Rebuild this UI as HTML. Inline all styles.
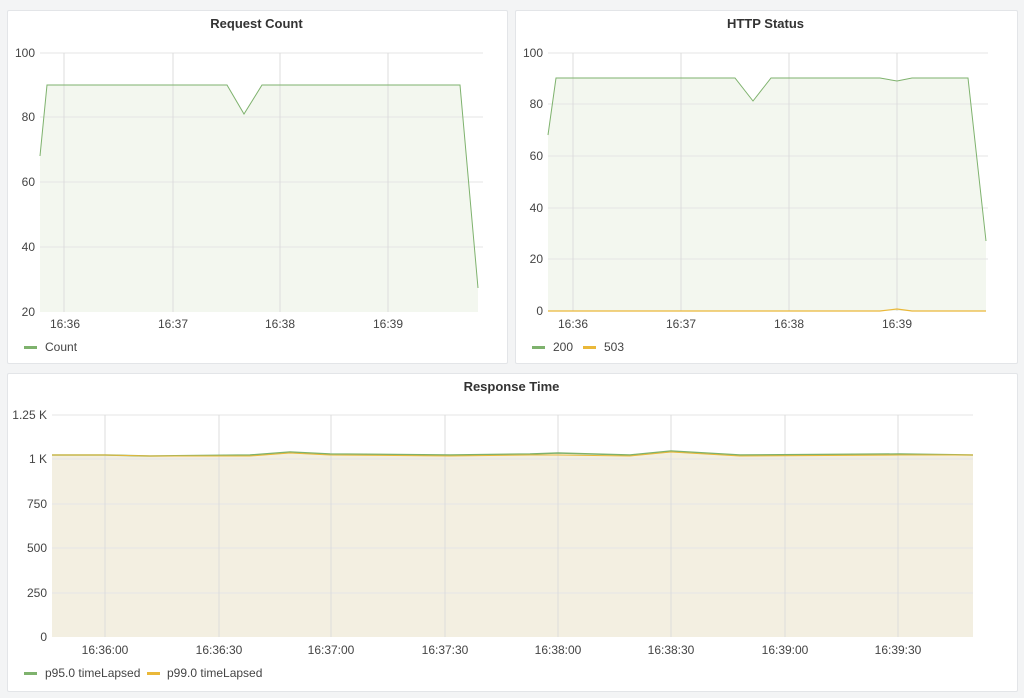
<!DOCTYPE html>
<html><head><style>
body{margin:0;width:1024px;height:698px;background:#f3f4f5;font-family:"Liberation Sans",sans-serif;position:relative;overflow:hidden}
.p{position:absolute;background:#fff;border:1px solid #e3e5e8;border-radius:2px}
.t{position:absolute;width:100%;text-align:center;top:6px;font-size:13px;font-weight:bold;color:#333}
svg{position:absolute;left:0;top:0}
svg text{font-family:"Liberation Sans",sans-serif;font-size:12px;fill:#444}
</style></head><body>
<div class="p" style="left:7px;top:10px;width:499px;height:352px"></div>
<div class="p" style="left:515px;top:10px;width:501px;height:352px"></div>
<div class="p" style="left:7px;top:373px;width:1009px;height:317px"></div>
<div style="position:absolute;left:7px;top:10px;width:499px"><div class="t">Request Count</div></div>
<div style="position:absolute;left:515px;top:10px;width:501px"><div class="t">HTTP Status</div></div>
<div style="position:absolute;left:7px;top:373px;width:1009px"><div class="t">Response Time</div></div>
<svg width="1024" height="698">
<polygon points="40,156 47,85 227,85 244,114 262,85 460,85 478,288 478,312 40,312" fill="#f3f7ef"/>
<polygon points="548,135 556,78 735,78 753,101 771,78 880,78 897,81 912,78 968,78 986,241 986,311 548,311" fill="#f3f7ef"/>
<polygon points="52,455 105,455 150,456 250,455 290,452 330,454 450,455 530,454 558,453 630,455 671,451 740,455 900,454 973,455 973,637 52,637" fill="#f3efe1"/>
<g stroke="#e6e6e6" stroke-width="1">
<line x1="40" y1="53" x2="483" y2="53"/><line x1="40" y1="117" x2="483" y2="117"/><line x1="40" y1="182" x2="483" y2="182"/><line x1="40" y1="247" x2="483" y2="247"/>
<line x1="548" y1="53" x2="988" y2="53"/><line x1="548" y1="104" x2="988" y2="104"/><line x1="548" y1="156" x2="988" y2="156"/><line x1="548" y1="208" x2="988" y2="208"/><line x1="548" y1="259" x2="988" y2="259"/>
<line x1="52" y1="415" x2="973" y2="415"/><line x1="52" y1="459" x2="973" y2="459"/><line x1="52" y1="504" x2="973" y2="504"/><line x1="52" y1="548" x2="973" y2="548"/><line x1="52" y1="593" x2="973" y2="593"/>
</g>
<g stroke="#dcdcdc" stroke-width="1">
<line x1="64" y1="53" x2="64" y2="312"/><line x1="173" y1="53" x2="173" y2="312"/><line x1="280" y1="53" x2="280" y2="312"/><line x1="388" y1="53" x2="388" y2="312"/>
<line x1="573" y1="53" x2="573" y2="311"/><line x1="681" y1="53" x2="681" y2="311"/><line x1="789" y1="53" x2="789" y2="311"/><line x1="897" y1="53" x2="897" y2="311"/>
<line x1="105" y1="415" x2="105" y2="637"/><line x1="219" y1="415" x2="219" y2="637"/><line x1="331" y1="415" x2="331" y2="637"/><line x1="445" y1="415" x2="445" y2="637"/><line x1="558" y1="415" x2="558" y2="637"/><line x1="671" y1="415" x2="671" y2="637"/><line x1="785" y1="415" x2="785" y2="637"/><line x1="898" y1="415" x2="898" y2="637"/>
</g>
<polyline points="40,156 47,85 227,85 244,114 262,85 460,85 478,288" fill="none" stroke="#7eb26d" stroke-width="1"/>
<polyline points="548,135 556,78 735,78 753,101 771,78 880,78 897,81 912,78 968,78 986,241" fill="none" stroke="#7eb26d" stroke-width="1"/>
<polyline points="548,311 880,311 897,309 912,311 986,311" fill="none" stroke="#eab839" stroke-width="1.2"/>
<polyline points="52,455 105,455 150,456 250,455 290,452 330,454 450,455 530,454 558,453 630,455 671,451 740,455 900,454 973,455" fill="none" stroke="#7eb26d" stroke-width="1.5"/>
<polyline points="52,455 105,455 150,456 250,456 290,453 330,455 450,456 530,455 558,455 630,456 671,452 740,456 900,455 973,455" fill="none" stroke="#eab839" stroke-width="1"/>
<g text-anchor="end">
<text x="35" y="57">100</text><text x="35" y="121">80</text><text x="35" y="186">60</text><text x="35" y="251">40</text><text x="35" y="316">20</text>
<text x="543" y="57">100</text><text x="543" y="108">80</text><text x="543" y="160">60</text><text x="543" y="212">40</text><text x="543" y="263">20</text><text x="543" y="315">0</text>
<text x="47" y="419">1.25 K</text><text x="47" y="463">1 K</text><text x="47" y="508">750</text><text x="47" y="552">500</text><text x="47" y="597">250</text><text x="47" y="641">0</text>
</g>
<g text-anchor="middle">
<text x="65" y="328">16:36</text><text x="173" y="328">16:37</text><text x="280" y="328">16:38</text><text x="388" y="328">16:39</text>
<text x="573" y="328">16:36</text><text x="681" y="328">16:37</text><text x="789" y="328">16:38</text><text x="897" y="328">16:39</text>
<text x="105" y="654">16:36:00</text><text x="219" y="654">16:36:30</text><text x="331" y="654">16:37:00</text><text x="445" y="654">16:37:30</text><text x="558" y="654">16:38:00</text><text x="671" y="654">16:38:30</text><text x="785" y="654">16:39:00</text><text x="898" y="654">16:39:30</text>
</g>
<rect x="24" y="346" width="13" height="3" fill="#7eb26d"/><text x="45" y="351">Count</text>
<rect x="532" y="346" width="13" height="3" fill="#7eb26d"/><text x="553" y="351">200</text>
<rect x="583" y="346" width="13" height="3" fill="#eab839"/><text x="604" y="351">503</text>
<rect x="24" y="672" width="13" height="3" fill="#7eb26d"/><text x="45" y="677">p95.0 timeLapsed</text>
<rect x="147" y="672" width="13" height="3" fill="#eab839"/><text x="167" y="677">p99.0 timeLapsed</text>
</svg>
</body></html>
